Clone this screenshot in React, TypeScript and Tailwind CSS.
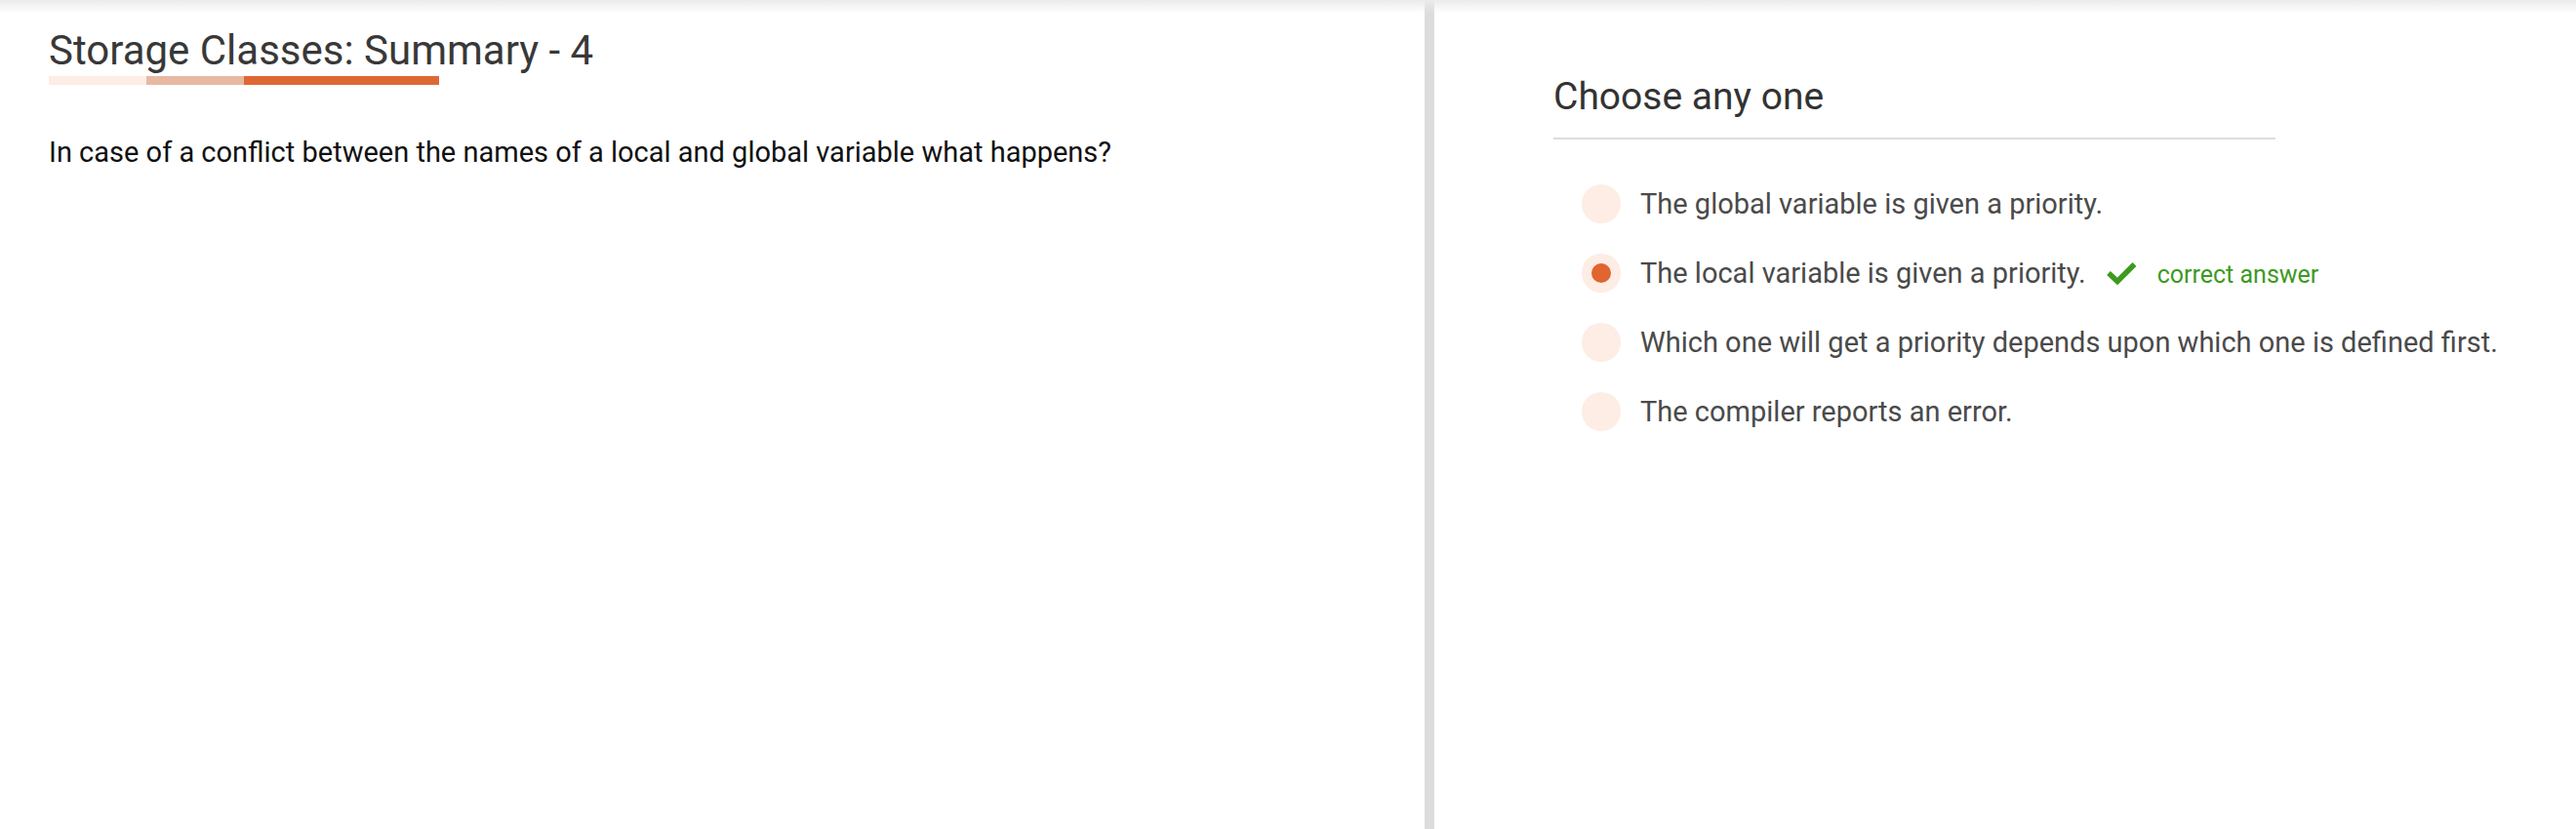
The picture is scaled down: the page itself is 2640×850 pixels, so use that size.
import React from 'react';

const options = [
  { text: 'The global variable is given a priority.', selected: false, correct: false },
  { text: 'The local variable is given a priority.', selected: true, correct: true },
  { text: 'Which one will get a priority depends upon which one is defined first.', selected: false, correct: false },
  { text: 'The compiler reports an error.', selected: false, correct: false },
];

const CheckIcon = () => (
  <svg width="32" height="24" viewBox="0 0 32 24" fill="none">
    <polyline points="3,12 12,20.5 29.5,3" stroke="#3d9a1f" strokeWidth="5.5" strokeLinejoin="miter" />
  </svg>
);

export default function App() {
  return (
    <div className="relative flex min-h-[850px] w-full bg-white font-[Roboto,sans-serif]">
      {/* top shadow from header */}
      <div className="pointer-events-none absolute inset-x-0 top-0 h-[14px] bg-linear-to-b from-[#ebebeb] to-[#ffffff00]" />

      {/* Question side */}
      <div className="w-[1460px] shrink-0 pl-[50px] pt-[27px]">
        <h1 className="text-[42px] leading-[49px] text-[#383838]">Storage Classes: Summary - 4</h1>
        <div className="mt-[2px] flex h-[9px] w-[400px]">
          <div className="w-[100px] bg-[#fdede5]" />
          <div className="w-[100px] bg-[#e7b9a2]" />
          <div className="w-[200px] bg-[#de6834]" />
        </div>
        <p className="mt-[51px] text-[29px] leading-[36px] text-[#111111]">
          In case of a conflict between the names of a local and global variable what happens?
        </p>
      </div>

      <div className="w-[10px] shrink-0 bg-[#dcdcdc]" />

      {/* Answer side */}
      <div className="flex-1 pl-[122px] pt-[76px]">
        <h2 className="w-[740px] border-b-2 border-[#dddddd] pb-[19px] text-[39px] leading-[46px] text-[#333333]">
          Choose any one
        </h2>
        <div className="mt-[46px] flex flex-col gap-[31px] pl-[29px]">
          {options.map((o) => (
            <div key={o.text} className="flex h-[40px] items-center">
              <div className="flex h-[40px] w-[40px] shrink-0 items-center justify-center rounded-full bg-[#fdede5]">
                {o.selected && <div className="h-[20px] w-[20px] rounded-full bg-[#e0652f]" />}
              </div>
              <span className="ml-[20px] text-[29px] leading-[40px] text-[#4a4a4a]">{o.text}</span>
              {o.correct && (
                <div className="ml-[20px] flex items-center">
                  <CheckIcon />
                  <span className="ml-[21px] mt-[4px] text-[25px] leading-[40px] text-[#3d9a1f]">correct answer</span>
                </div>
              )}
            </div>
          ))}
        </div>
      </div>
    </div>
  );
}
